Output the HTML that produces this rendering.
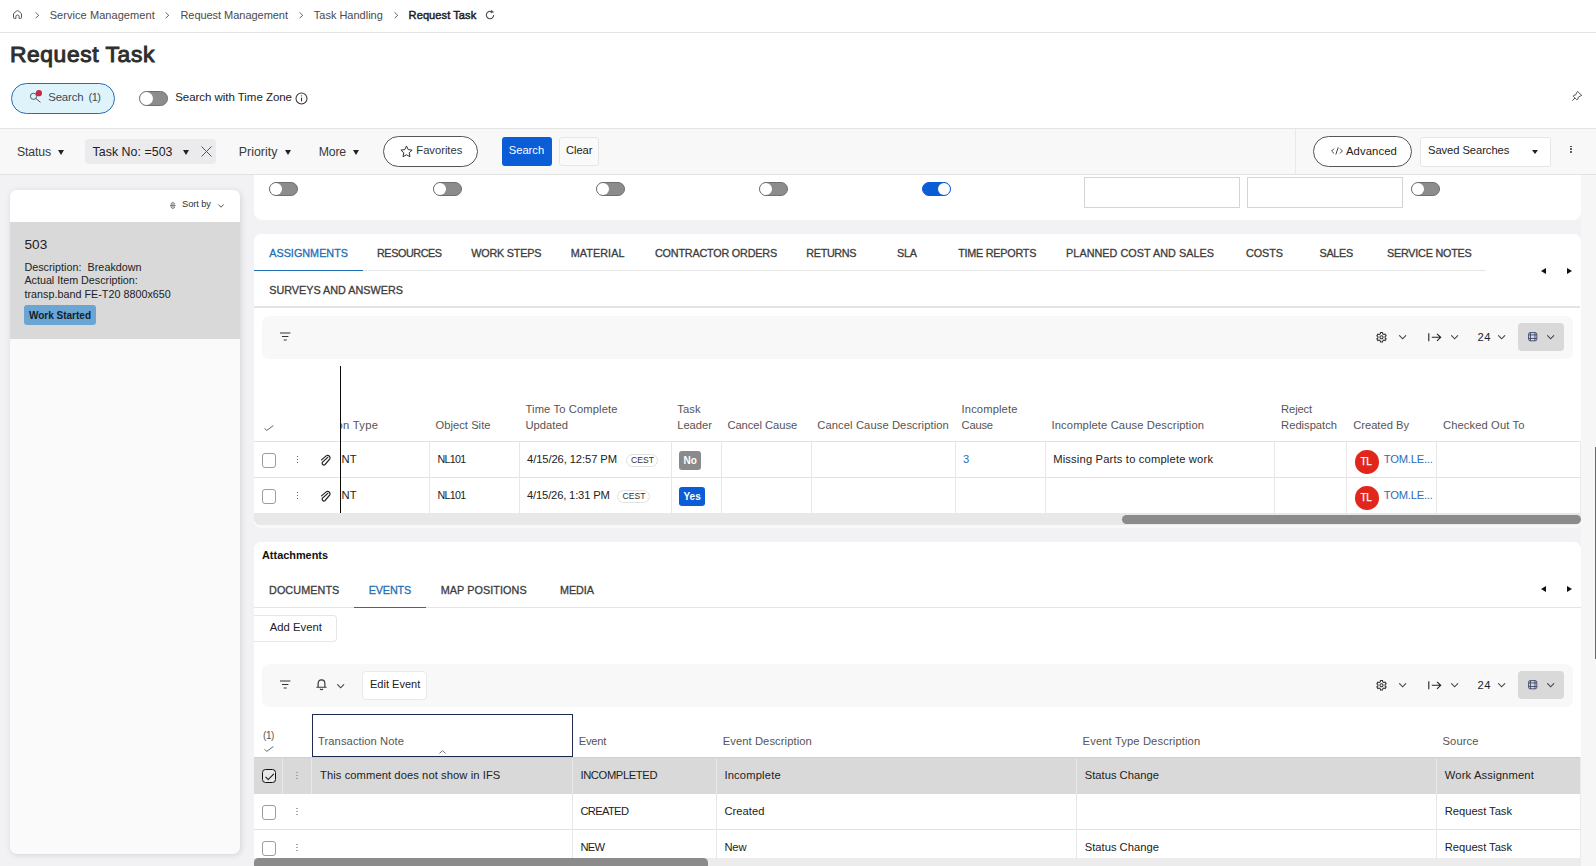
<!DOCTYPE html><html><head>
<meta charset="utf-8">
<title>Request Task</title>
<style>
*{box-sizing:border-box;margin:0;padding:0}
html,body{width:1596px;height:866px;overflow:hidden}
body{font-family:"Liberation Sans",sans-serif;font-size:11px;color:#222;background:#f2f1f3;position:relative}
.abs{position:absolute}
.t{position:absolute;white-space:nowrap;line-height:1}
svg{position:absolute;overflow:visible}
/* top */
#top{left:0;top:0;width:1596px;height:129px;background:#fff;border-bottom:1px solid #e4e4e4}
#crumbline{left:0;top:32px;width:1596px;height:1px;background:#e3e3e3}
.bc{font-size:11px;color:#4a4a4a;top:10px}
.pill{position:absolute;border:1px solid #555;border-radius:16px;background:#fff}
.btn{position:absolute;border:1px solid #dedede;border-radius:3px;background:#fff}
.tog{position:absolute;width:29px;height:14px;border-radius:7px;background:#8c8c8c;border:1px solid #6f6f6f}
.tog i{position:absolute;left:0px;top:0px;width:12px;height:12px;border-radius:6px;background:#fff}
.tog.on{background:#0b5cd7;border-color:#0b5cd7}
.tog.on i{left:15px}
#fbar{left:0;top:129px;width:1596px;height:46px;background:#f8f8f8;border-bottom:1px solid #e2e2e2}
.ft{font-size:12.3px;color:#3a3a3a;top:146.2px}
.caret{position:absolute;width:0;height:0;border-left:3.5px solid transparent;border-right:3.5px solid transparent;border-top:5px solid #222}
.card{position:absolute;background:#fff}
.tab{font-size:10.8px;color:#3c3c3c;letter-spacing:0;-webkit-text-stroke:0.3px #3c3c3c}
.tab.act{color:#1f6fb5;-webkit-text-stroke:0.3px #1f6fb5}
.hd{font-size:11.2px;color:#555}
.cell{font-size:11.2px;color:#222}
.vl{position:absolute;width:1px;background:#e7e7e7}
.hl{position:absolute;height:1px;background:#e2e2e2}
.cb{position:absolute;width:14px;height:14.5px;border:1px solid #9c9c9c;border-radius:3px;background:#fff}
.dots{position:absolute;width:2px}
.dots i{display:block;width:1.7px;height:1.7px;border-radius:1px;background:#333;margin-bottom:1.25px}
.dots.lt i{background:#9a9a9a;width:1.3px}
.tb{background:#f8f8f8;border-radius:7px}
.arrl{width:0;height:0;border-top:3.2px solid transparent;border-bottom:3.2px solid transparent;border-right:5px solid #111}
.arrr{width:0;height:0;border-top:3.2px solid transparent;border-bottom:3.2px solid transparent;border-left:5px solid #111}
</style>
</head>
<body>
<!-- TOP -->
<div class="abs" id="top"></div>
<div class="abs" id="crumbline"></div>
<svg style="left:12.5px;top:9.8px" width="9" height="9" viewBox="0 0 9 9" fill="none" stroke="#555" stroke-width="1" stroke-linejoin="round"><path d="M0.5 3.9 Q0.5 3.5 0.9 3.2 L3.9 0.8 Q4.5 0.4 5.1 0.8 L8.1 3.2 Q8.5 3.5 8.5 3.9 V7.6 Q8.5 8.4 7.7 8.4 H6.1 V6.2 Q6.1 5 4.5 5 Q2.9 5 2.9 6.200 V8.4 H1.3 Q0.5 8.4 0.5 7.6 Z"></path></svg>
<svg style="left:34.6px;top:11.7px" width="4.5" height="6.6" viewBox="0 0 5 8" fill="none" stroke="#4a4a4a" stroke-width="1.05"><path d="M0.5 0.5 L4.3 4 L0.5 7.5"></path></svg>
<span class="t bc" style="left: 49.7px; letter-spacing: 0.062px;">Service Management</span>
<svg style="left:165.2px;top:11.7px" width="4.5" height="6.6" viewBox="0 0 5 8" fill="none" stroke="#4a4a4a" stroke-width="1.05"><path d="M0.5 0.5 L4.3 4 L0.5 7.5"></path></svg>
<span class="t bc" style="left: 180.4px; letter-spacing: -0.037px;">Request Management</span>
<svg style="left:298.6px;top:11.7px" width="4.5" height="6.6" viewBox="0 0 5 8" fill="none" stroke="#4a4a4a" stroke-width="1.05"><path d="M0.5 0.5 L4.3 4 L0.5 7.5"></path></svg>
<span class="t bc" style="left: 313.8px; letter-spacing: -0.008px;">Task Handling</span>
<svg style="left:394px;top:11.7px" width="4.5" height="6.6" viewBox="0 0 5 8" fill="none" stroke="#4a4a4a" stroke-width="1.05"><path d="M0.5 0.5 L4.3 4 L0.5 7.5"></path></svg>
<span class="t bc" style="left: 408.6px; font-weight: 400; color: rgb(28, 28, 28); font-size: 11.1px; -webkit-text-stroke: 0.45px rgb(28, 28, 28); letter-spacing: 0.053px;">Request Task</span>
<svg style="left:484.8px;top:10px" width="10" height="10" viewBox="0 0 10 10" fill="none" stroke="#444" stroke-width="1.05"><path d="M8.7 5 A3.7 3.7 0 1 1 7 1.9"></path><path d="M6.4 0.2 L8.6 2.1 L5.9 3.1 Z" fill="#444" stroke-width="0.4"></path></svg>

<span class="t" style="left: 10px; top: 42.8px; font-size: 22.8px; font-weight: 400; color: rgb(46, 46, 46); -webkit-text-stroke: 1px rgb(46, 46, 46); letter-spacing: 0.598px;">Request Task</span>

<div class="pill" style="left:11px;top:83px;width:104px;height:31px;border-color:#2a6cb3;background:#dff3fb;border-radius:16px"></div>
<svg style="left:29px;top:90px" width="14" height="14" viewBox="0 0 14 14" fill="none" stroke="#4a5868" stroke-width="1"><circle cx="4.5" cy="6.3" r="3.1"></circle><path d="M6.9 8.6 L11.5 12.3"></path><circle cx="9.9" cy="3.2" r="3.1" fill="#c5294a" stroke="none"></circle></svg>
<span class="t" style="left: 48.2px; top: 92px; font-size: 11.4px; color: rgb(59, 74, 90); letter-spacing: -0.139px;">Search</span><span class="t" style="left:88.6px;top:92px;font-size:11px;color:#3b4a5a;letter-spacing:-0.6px">(1)</span>

<div class="tog" style="left:139px;top:91px;height:15px;border-radius:7.5px"><i style="width:13px;height:13px;border-radius:6.5px"></i></div>
<span class="t" style="left: 175.2px; top: 92px; font-size: 11.5px; color: rgb(34, 34, 34); letter-spacing: -0.04px;">Search with Time Zone</span>
<svg style="left:294.5px;top:91.5px" width="13" height="13" viewBox="0 0 13 13" fill="none" stroke="#333" stroke-width="1.05"><circle cx="6.5" cy="6.5" r="5.5"></circle><path d="M6.5 5.6 V9.4" stroke-width="1.1"></path><circle cx="6.5" cy="3.8" r="0.6" fill="#333" stroke="none"></circle></svg>
<svg style="left:1572px;top:91px" width="10" height="10" viewBox="0 0 10 10" fill="none" stroke="#444" stroke-width="0.9" stroke-linejoin="round"><path d="M5.5 0.4 L9.7 4.4 L8 5.2 L6.3 6.2 L5.8 8.2 L4.6 8.7 L1.3 5.3 L1.8 4.3 L3.8 3.8 L4.6 1.7 Z"></path><path d="M2.9 7 L0.3 9.7"></path></svg>

<!-- FILTER BAR -->
<div class="abs" id="fbar"></div>
<span class="t ft" style="left: 17px; letter-spacing: -0.135px;">Status</span><div class="caret" style="left:58px;top:149.6px"></div>
<div class="abs" style="left:85px;top:139px;width:131px;height:25px;background:#ebebee;border-radius:4px"></div>
<span class="t ft" style="left: 92.5px; font-size: 12.4px; color: rgb(34, 34, 34); letter-spacing: 0.036px;">Task No: =503</span><div class="caret" style="left:183px;top:149.6px"></div>
<svg style="left:201px;top:146px" width="11" height="11" viewBox="0 0 11 11" stroke="#555" stroke-width="1"><path d="M0.5 0.5 L10.5 10.5 M10.5 0.5 L0.5 10.5"></path></svg>
<span class="t ft" style="left: 238.7px; font-size: 12.4px; letter-spacing: 0.034px;">Priority</span><div class="caret" style="left:285px;top:149.6px"></div>
<span class="t ft" style="left: 318.7px; letter-spacing: -0.177px;">More</span><div class="caret" style="left:353px;top:149.6px"></div>
<div class="pill" style="left:383px;top:136px;width:95px;height:31px"></div>
<svg style="left:400px;top:145px" width="13" height="13" viewBox="0 0 13 13" fill="none" stroke="#333" stroke-width="1" stroke-linejoin="round"><path d="M6.5 1 L8.2 4.6 L12.1 5.1 L9.2 7.8 L10 11.7 L6.5 9.8 L3 11.7 L3.8 7.8 L0.9 5.1 L4.8 4.6 Z"></path></svg>
<span class="t" style="left: 416.3px; top: 145px; font-size: 11.2px; color: rgb(51, 51, 51); letter-spacing: -0.002px;">Favorites</span>
<div class="abs" style="left:502px;top:137px;width:50px;height:29px;background:#0b5cd7;border-radius:3px"></div>
<span class="t" style="left: 508.7px; top: 145px; font-size: 11.2px; color: rgb(255, 255, 255); letter-spacing: 0.009px;">Search</span>
<div class="btn" style="left:558.8px;top:137px;width:40.6px;height:29px;background:#fafafa;border-color:#e6e6e6"></div>
<span class="t" style="left: 566px; top: 145px; font-size: 11.2px; color: rgb(34, 34, 34); letter-spacing: -0.059px;">Clear</span>
<div class="vl" style="left:1295px;top:129px;height:46px;background:#e9e9e9"></div>
<div class="pill" style="left:1312.7px;top:136px;width:99.8px;height:31px"></div>
<svg style="left:1330.5px;top:147px" width="12" height="8" viewBox="0 0 12 8" fill="none" stroke="#333" stroke-width="0.9"><path d="M3 1.6 L0.6 4 L3 6.4 M9 1.6 L11.4 4 L9 6.4 M7.2 0.4 L4.8 7.6"></path></svg>
<span class="t" style="left: 1346px; top: 145.5px; font-size: 11.3px; color: rgb(34, 34, 34); letter-spacing: 0.079px;">Advanced</span>
<div class="btn" style="left:1419.7px;top:136.5px;width:131px;height:30px;border-color:#e6e6e6"></div>
<span class="t" style="left: 1428px; top: 145px; font-size: 11.2px; color: rgb(34, 34, 34); letter-spacing: -0.061px;">Saved Searches</span>
<div class="caret" style="left:1532.3px;top:149.6px;border-left-width:3px;border-right-width:3px;border-top-width:4px"></div>
<div class="dots" style="left:1570.3px;top:145.5px"><i style="background:#333"></i><i style="background:#333"></i><i style="background:#333"></i></div>

<!-- LEFT PANEL -->
<div class="card" style="left:10px;top:190px;width:230px;height:664px;background:#fafafa;border-radius:7px;box-shadow:1px 1px 6px rgba(0,0,0,.13)"></div>
<div class="card" style="left:10px;top:190px;width:230px;height:32px;border-radius:7px 7px 0 0"></div>
<svg style="left:169.6px;top:201.2px" width="5.6" height="9" viewBox="0 0 6 9" fill="none" stroke="#555" stroke-width="0.8"><path d="M0.8 3 L3 0.8 L5.2 3 Z M0.8 6 L3 8.2 L5.2 6 Z M0 4.5 H6"></path></svg>
<span class="t" style="left: 182.1px; top: 200.3px; font-size: 9.3px; color: rgb(51, 51, 51); letter-spacing: -0.092px;">Sort by</span>
<svg style="left:217.6px;top:203.6px" width="6" height="4" viewBox="0 0 6 4" fill="none" stroke="#444" stroke-width="0.9"><path d="M0.4 0.5 L3 3.2 L5.6 0.5"></path></svg>
<div class="abs" style="left:10px;top:222px;width:230px;height:116.5px;background:#d9d9d9"></div>
<span class="t" style="left: 24.4px; top: 238px; font-size: 13.6px; color: rgb(34, 34, 34); letter-spacing: 0.106px;">503</span>
<span class="t" style="left: 24.4px; top: 262px; font-size: 10.75px; color: rgb(34, 34, 34); letter-spacing: 0.031px;">Description:&nbsp; Breakdown</span>
<span class="t" style="left: 24.4px; top: 275px; font-size: 10.75px; color: rgb(34, 34, 34); letter-spacing: -0.005px;">Actual Item Description:</span>
<span class="t" style="left: 24.4px; top: 289px; font-size: 10.75px; color: rgb(34, 34, 34); letter-spacing: 0.022px;">transp.band FE-T20 8800x650</span>
<div class="abs" style="left:24.2px;top:305.4px;width:71.5px;height:19.2px;background:#6aa5d3;border-radius:3px"></div>
<span class="t" style="left: 29px; top: 310.8px; font-size: 10px; font-weight: 700; color: rgb(16, 32, 46); letter-spacing: -0.006px;">Work Started</span>

<!-- TOP RIGHT CARD -->
<div class="card" style="left:253.8px;top:175px;width:1327.5px;height:45px;border-radius:0 0 8px 8px"></div>
<div class="tog" style="left:269.3px;top:182px"><i></i></div>
<div class="tog" style="left:432.5px;top:182px"><i></i></div>
<div class="tog" style="left:595.5px;top:182px"><i></i></div>
<div class="tog" style="left:758.6px;top:182px"><i></i></div>
<div class="tog on" style="left:922px;top:182px"><i></i></div>
<div class="abs" style="left:1084px;top:177px;width:156px;height:31px;border:1px solid #d4d4d4;background:#fff"></div>
<div class="abs" style="left:1247px;top:177px;width:156px;height:31px;border:1px solid #d4d4d4;background:#fff"></div>
<div class="tog" style="left:1410.5px;top:182px"><i></i></div>

<!-- ASSIGNMENTS CARD -->
<div class="card" style="left:253.8px;top:234px;width:1327.5px;height:293.5px;border-radius:7px;background:linear-gradient(#fff 0,#fff 290px,#f8f8f8 290px)"></div>
<div class="hl" style="left:254px;top:270px;width:1232px;background:#e6e6e6"></div>
<div class="abs" style="left:254px;top:269.6px;width:108.6px;height:1.6px;background:#1f6fb5"></div>
<span class="t tab act" style="left: 269.2px; top: 248px; letter-spacing: 0.021px;">ASSIGNMENTS</span>
<span class="t tab" style="left: 377px; top: 248px; letter-spacing: -0.426px;">RESOURCES</span>
<span class="t tab" style="left: 471.2px; top: 248px; letter-spacing: -0.189px;">WORK STEPS</span>
<span class="t tab" style="left: 570.7px; top: 248px; letter-spacing: 0.085px;">MATERIAL</span>
<span class="t tab" style="left: 655px; top: 248px; letter-spacing: -0.192px;">CONTRACTOR ORDERS</span>
<span class="t tab" style="left: 806.3px; top: 248px; letter-spacing: -0.331px;">RETURNS</span>
<span class="t tab" style="left: 897.1px; top: 248px; letter-spacing: -0.261px;">SLA</span>
<span class="t tab" style="left: 958.2px; top: 248px; letter-spacing: -0.236px;">TIME REPORTS</span>
<span class="t tab" style="left: 1066.1px; top: 248px; letter-spacing: 0.047px;">PLANNED COST AND SALES</span>
<span class="t tab" style="left: 1246px; top: 248px; letter-spacing: -0.051px;">COSTS</span>
<span class="t tab" style="left: 1319.6px; top: 248px; letter-spacing: -0.328px;">SALES</span>
<span class="t tab" style="left: 1387px; top: 248px; letter-spacing: -0.217px;">SERVICE NOTES</span>
<span class="t tab" style="left: 269.2px; top: 285px; letter-spacing: 0.011px;">SURVEYS AND ANSWERS</span>
<div class="abs" style="left:254px;top:306.4px;width:1326px;height:1.3px;background:#e4e4e4"></div>
<div class="abs arrl" style="left:1541px;top:268px"></div>
<div class="abs arrr" style="left:1566.5px;top:268px"></div>

<!-- toolbar 1 -->
<div class="abs tb" style="left:262px;top:316.2px;width:1311.3px;height:42.6px"></div>
<svg class="ic-filter" style="left:279.6px;top:332.4px" width="10.4" height="9" viewBox="0 0 11 9" fill="none" stroke="#333" stroke-width="1.2"><path d="M0 0.8 H11 M2.1 4.5 H8.9 M3.9 8.2 H7.1"></path></svg>

<!--TB337.4-->
<svg style="left:1376.4px;top:332.2px" width="11" height="10.6" viewBox="0 0 11 10.6" fill="none" stroke="#333" stroke-width="1.05" stroke-linejoin="round"><path d="M6.60 0.53 L4.40 0.53 L4.42 1.76 L2.98 2.59 L1.92 1.96 L0.81 3.87 L1.89 4.47 L1.89 6.13 L0.81 6.73 L1.92 8.64 L2.98 8.01 L4.42 8.84 L4.40 10.07 L6.60 10.07 L6.58 8.84 L8.02 8.01 L9.08 8.64 L10.19 6.73 L9.11 6.13 L9.11 4.47 L10.19 3.87 L9.08 1.96 L8.02 2.59 L6.58 1.76 Z"></path><circle cx="5.5" cy="5.3" r="1.55"></circle></svg>
<svg style="left:1398.7px;top:334.7px" width="7.3" height="4.4" viewBox="0 0 7 4.2" fill="none" stroke="#444" stroke-width="1.05" stroke-linecap="round"><path d="M0.5 0.5 L3.5 3.6 L6.5 0.5"></path></svg>
<svg style="left:1427.5px;top:332.79999999999995px" width="14" height="9" viewBox="0 0 14 9" fill="none" stroke="#222" stroke-width="1.1"><path d="M0.8 0.3 V8.3 M3.8 4.3 H12.6 M9 0.8 L12.7 4.3 L9 7.8"></path></svg>
<svg style="left:1450.8px;top:334.7px" width="7.3" height="4.4" viewBox="0 0 7 4.2" fill="none" stroke="#444" stroke-width="1.05" stroke-linecap="round"><path d="M0.5 0.5 L3.5 3.6 L6.5 0.5"></path></svg>
<span class="t" style="left: 1477.6px; top: 331.6px; font-size: 11.2px; color: rgb(34, 34, 34); letter-spacing: 0.347px;">24</span>
<svg style="left:1498px;top:334.7px" width="7.3" height="4.4" viewBox="0 0 7 4.2" fill="none" stroke="#444" stroke-width="1.05" stroke-linecap="round"><path d="M0.5 0.5 L3.5 3.6 L6.5 0.5"></path></svg>
<div class="abs" style="left:1518px;top:323.09999999999997px;width:46px;height:28px;background:#d9d9d9;border-radius:4px"></div>
<svg style="left:1528px;top:332.4px" width="9.4" height="9.4" viewBox="0 0 10 10" fill="none" stroke="#3a4668" stroke-width="0.95"><rect x="0.6" y="0.6" width="8.8" height="8.8" rx="1.8"></rect><path d="M0.6 3.1 H9.4 M0.6 6.9 H9.4 M2.6 0.6 V9.4 M7.4 0.6 V9.4"></path></svg>
<svg style="left:1547px;top:334.7px" width="7.3" height="4.4" viewBox="0 0 7 4.2" fill="none" stroke="#444" stroke-width="1.05" stroke-linecap="round"><path d="M0.5 0.5 L3.5 3.6 L6.5 0.5"></path></svg>
<!--/TB337.4-->


<!-- table 1 -->
<div class="hl" style="left:254px;top:440.8px;width:1326px"></div>
<div class="hl" style="left:254px;top:477px;width:1326px"></div>
<div class="abs" style="left:253.8px;top:513.2px;width:1327.5px;height:11.4px;background:#e8e8e8;border-radius:0 0 6px 6px"></div>
<div class="abs" style="left:1122.2px;top:515px;width:459px;height:9px;background:#8b8b8b;border-radius:4.5px"></div>
<div class="abs" style="left:340px;top:366px;width:1.3px;height:147px;background:#0a0a0a"></div>
<div class="vl" style="left:429px;top:441px;height:72px"></div>
<div class="vl" style="left:519px;top:441px;height:72px"></div>
<div class="vl" style="left:671px;top:441px;height:72px"></div>
<div class="vl" style="left:721px;top:441px;height:72px"></div>
<div class="vl" style="left:811px;top:441px;height:72px"></div>
<div class="vl" style="left:955px;top:441px;height:72px"></div>
<div class="vl" style="left:1045px;top:441px;height:72px"></div>
<div class="vl" style="left:1274px;top:441px;height:72px"></div>
<div class="vl" style="left:1346px;top:441px;height:72px"></div>
<div class="vl" style="left:1436px;top:441px;height:72px"></div>
<div class="vl" style="left:1579.5px;top:441px;height:72px;background:#ececec"></div>

<svg style="left:263.5px;top:424.5px" width="10" height="6" viewBox="0 0 10 6" fill="none" stroke="#555" stroke-width="0.9"><path d="M0.5 3.4 L2.8 5.4 L9.4 0.5"></path></svg>
<div class="abs" style="left:341.3px;top:400px;width:60px;height:40px;overflow:hidden"><span class="t hd" style="left:-4.8px;top:20px;letter-spacing:0.3px">on Type</span></div>
<span class="t hd" style="left: 435.5px; top: 420px; letter-spacing: 0.027px;">Object Site</span>
<span class="t hd" style="left: 525.5px; top: 404px; letter-spacing: 0.123px;">Time To Complete</span>
<span class="t hd" style="left: 525.5px; top: 420px; letter-spacing: 0.031px;">Updated</span>
<span class="t hd" style="left: 677.2px; top: 404px; letter-spacing: 0.128px;">Task</span>
<span class="t hd" style="left: 677.2px; top: 420px; letter-spacing: -0.009px;">Leader</span>
<span class="t hd" style="left: 727.4px; top: 420px; letter-spacing: -0.035px;">Cancel Cause</span>
<span class="t hd" style="left: 817.3px; top: 420px; letter-spacing: 0.094px;">Cancel Cause Description</span>
<span class="t hd" style="left: 961.6px; top: 404px; letter-spacing: 0.118px;">Incomplete</span>
<span class="t hd" style="left: 961.6px; top: 420px; letter-spacing: -0.236px;">Cause</span>
<span class="t hd" style="left: 1051.5px; top: 420px; letter-spacing: 0.12px;">Incomplete Cause Description</span>
<span class="t hd" style="left: 1281.1px; top: 404px; letter-spacing: -0.124px;">Reject</span>
<span class="t hd" style="left: 1281.1px; top: 420px; letter-spacing: -0.009px;">Redispatch</span>
<span class="t hd" style="left: 1353.2px; top: 420px; letter-spacing: -0.019px;">Created By</span>
<span class="t hd" style="left: 1443px; top: 420px; letter-spacing: 0.106px;">Checked Out To</span>

<div class="cb" style="left:262px;top:453px"></div>
<div class="dots" style="left:296.7px;top:455.8px"><i></i><i></i><i></i></div>
<svg style="left:321px;top:454.7px" width="10" height="11" viewBox="0 0 10 11" fill="none" stroke="#222" stroke-width="1.2" stroke-linecap="round"><path d="M0.5 4.9 L5.2 0.9 A2.4 2.4 0 0 1 8.8 3.9 L3.9 9.7 A1.8 1.8 0 0 1 1.3 7.4 L6.8 2.4"></path></svg>
<div class="abs" style="left:341.3px;top:441px;width:40px;height:36px;overflow:hidden"><span class="t cell" style="left:-7.6px;top:13px;letter-spacing:0.25px">ENT</span></div>
<span class="t cell" style="left: 437.5px; top: 454.2px; font-size: 10.7px; letter-spacing: -0.7px;">NL101</span>
<span class="t cell" style="left: 527px; top: 454px; letter-spacing: -0.09px;">4/15/26, 12:57 PM</span>
<div class="abs" style="left:625.5px;top:453.5px;width:32.5px;height:13px;border:1px solid #e2e2e2;border-radius:7px;background:#fff"></div>
<span class="t" style="left:631.0px;top:456px;font-size:8.6px;color:#333">CEST</span>
<div class="abs" style="left:679px;top:451px;width:22px;height:19px;background:#8a8a8a;border-radius:3px"></div>
<span class="t" style="left:683.5px;top:455.5px;font-size:10px;font-weight:700;color:#fff">No</span>
<div class="abs" style="left:1355px;top:450px;width:23.5px;height:23.5px;border-radius:50%;background:#e1261c"></div>
<span class="t" style="left:1360.6px;top:457.2px;font-size:10px;color:#fff;letter-spacing:-0.4px;-webkit-text-stroke:0.25px #fff">TL</span>
<span class="t cell" style="left: 1383.8px; top: 454px; color: rgb(45, 109, 181); letter-spacing: -0.223px;">TOM.LE...</span>

<div class="cb" style="left:262px;top:489px"></div>
<div class="dots" style="left:296.7px;top:491.8px"><i></i><i></i><i></i></div>
<svg style="left:321px;top:490.7px" width="10" height="11" viewBox="0 0 10 11" fill="none" stroke="#222" stroke-width="1.2" stroke-linecap="round"><path d="M0.5 4.9 L5.2 0.9 A2.4 2.4 0 0 1 8.8 3.9 L3.9 9.7 A1.8 1.8 0 0 1 1.3 7.4 L6.8 2.4"></path></svg>
<div class="abs" style="left:341.3px;top:477px;width:40px;height:36px;overflow:hidden"><span class="t cell" style="left:-7.6px;top:13px;letter-spacing:0.25px">ENT</span></div>
<span class="t cell" style="left: 437.5px; top: 490.2px; font-size: 10.7px; letter-spacing: -0.7px;">NL101</span>
<span class="t cell" style="left: 527px; top: 490px; letter-spacing: -0.161px;">4/15/26, 1:31 PM</span>
<div class="abs" style="left:617px;top:489.5px;width:32.5px;height:13px;border:1px solid #e2e2e2;border-radius:7px;background:#fff"></div>
<span class="t" style="left:622.5px;top:492px;font-size:8.6px;color:#333">CEST</span>
<div class="abs" style="left:679px;top:487px;width:26px;height:19px;background:#0b5cd7;border-radius:3px"></div>
<span class="t" style="left:683.5px;top:491.5px;font-size:10px;font-weight:700;color:#fff">Yes</span>
<div class="abs" style="left:1355px;top:486px;width:23.5px;height:23.5px;border-radius:50%;background:#e1261c"></div>
<span class="t" style="left:1360.6px;top:493.2px;font-size:10px;color:#fff;letter-spacing:-0.4px;-webkit-text-stroke:0.25px #fff">TL</span>
<span class="t cell" style="left: 1383.8px; top: 490px; color: rgb(45, 109, 181); letter-spacing: -0.223px;">TOM.LE...</span>

<span class="t cell" style="left:963px;top:454px;color:#2d6db5">3</span>
<span class="t cell" style="left: 1053.2px; top: 454px; letter-spacing: 0.172px;">Missing Parts to complete work</span>

<!-- ATTACHMENTS CARD -->
<div class="card" style="left:253.8px;top:542px;width:1327.5px;height:340px;border-radius:7px 7px 0 0"></div>
<span class="t" style="left: 262px; top: 550px; font-size: 10.9px; font-weight: 700; color: rgb(17, 17, 17); letter-spacing: 0.003px;">Attachments</span>
<div class="abs" style="left:254px;top:606.8px;width:1327px;height:1.2px;background:#e4e4e4"></div>
<div class="abs" style="left:354px;top:606.6px;width:72.2px;height:1.6px;background:#1f6fb5"></div>
<span class="t tab" style="left: 269px; top: 585px; letter-spacing: 0.088px;">DOCUMENTS</span>
<span class="t tab act" style="left: 368.7px; top: 585px; letter-spacing: -0.121px;">EVENTS</span>
<span class="t tab" style="left: 440.7px; top: 585px; letter-spacing: 0.083px;">MAP POSITIONS</span>
<span class="t tab" style="left: 560px; top: 585px; letter-spacing: -0.051px;">MEDIA</span>
<div class="abs arrl" style="left:1541px;top:585.5px"></div>
<div class="abs arrr" style="left:1566.5px;top:585.5px"></div>
<div class="btn" style="left:253.8px;top:615.2px;width:82.9px;height:26.4px;border-color:#e6e6e6;border-left:none;border-radius:0 4px 4px 0"></div>
<span class="t" style="left: 269.8px; top: 622px; font-size: 11.25px; color: rgb(34, 34, 34); letter-spacing: 0.01px;">Add Event</span>

<!-- toolbar 2 -->
<div class="abs tb" style="left:262px;top:664px;width:1311.3px;height:42.6px"></div>
<svg class="ic-filter" style="left:279.6px;top:680.4px" width="10.4" height="9" viewBox="0 0 11 9" fill="none" stroke="#333" stroke-width="1.2"><path d="M0 0.8 H11 M2.1 4.5 H8.9 M3.9 8.2 H7.1"></path></svg>
<svg style="left:315.5px;top:679.3px" width="11" height="11" viewBox="0 0 11 11" fill="none" stroke="#333" stroke-width="1.15" stroke-linecap="round"><path d="M0.9 8.2 H10.1 M2.1 8.2 V4.7 Q2.1 0.8 5.5 0.8 Q8.9 0.8 8.9 4.7 V8.2 M4.3 10.2 Q5.5 10.9 6.7 10.2"></path></svg>
<svg style="left:337.3px;top:684.4px" width="7.3" height="4.4" viewBox="0 0 7 4.2" fill="none" stroke="#444" stroke-width="1.05" stroke-linecap="round"><path d="M0.5 0.5 L3.5 3.6 L6.5 0.5"></path></svg>
<div class="btn" style="left:362.2px;top:671px;width:64.6px;height:28.5px;border-color:#e9e9e9;border-radius:4px"></div>
<span class="t" style="left: 370px; top: 679px; font-size: 11px; color: rgb(34, 34, 34); letter-spacing: 0.007px;">Edit Event</span>

<!--TB685.3-->
<svg style="left:1376.4px;top:680.0999999999999px" width="11" height="10.6" viewBox="0 0 11 10.6" fill="none" stroke="#333" stroke-width="1.05" stroke-linejoin="round"><path d="M6.60 0.53 L4.40 0.53 L4.42 1.76 L2.98 2.59 L1.92 1.96 L0.81 3.87 L1.89 4.47 L1.89 6.13 L0.81 6.73 L1.92 8.64 L2.98 8.01 L4.42 8.84 L4.40 10.07 L6.60 10.07 L6.58 8.84 L8.02 8.01 L9.08 8.64 L10.19 6.73 L9.11 6.13 L9.11 4.47 L10.19 3.87 L9.08 1.96 L8.02 2.59 L6.58 1.76 Z"></path><circle cx="5.5" cy="5.3" r="1.55"></circle></svg>
<svg style="left:1398.7px;top:682.5999999999999px" width="7.3" height="4.4" viewBox="0 0 7 4.2" fill="none" stroke="#444" stroke-width="1.05" stroke-linecap="round"><path d="M0.5 0.5 L3.5 3.6 L6.5 0.5"></path></svg>
<svg style="left:1427.5px;top:680.6999999999999px" width="14" height="9" viewBox="0 0 14 9" fill="none" stroke="#222" stroke-width="1.1"><path d="M0.8 0.3 V8.3 M3.8 4.3 H12.6 M9 0.8 L12.7 4.3 L9 7.8"></path></svg>
<svg style="left:1450.8px;top:682.5999999999999px" width="7.3" height="4.4" viewBox="0 0 7 4.2" fill="none" stroke="#444" stroke-width="1.05" stroke-linecap="round"><path d="M0.5 0.5 L3.5 3.6 L6.5 0.5"></path></svg>
<span class="t" style="left: 1477.6px; top: 679.5px; font-size: 11.2px; color: rgb(34, 34, 34); letter-spacing: 0.347px;">24</span>
<svg style="left:1498px;top:682.5999999999999px" width="7.3" height="4.4" viewBox="0 0 7 4.2" fill="none" stroke="#444" stroke-width="1.05" stroke-linecap="round"><path d="M0.5 0.5 L3.5 3.6 L6.5 0.5"></path></svg>
<div class="abs" style="left:1518px;top:671.0px;width:46px;height:28px;background:#d9d9d9;border-radius:4px"></div>
<svg style="left:1528px;top:680.3px" width="9.4" height="9.4" viewBox="0 0 10 10" fill="none" stroke="#3a4668" stroke-width="0.95"><rect x="0.6" y="0.6" width="8.8" height="8.8" rx="1.8"></rect><path d="M0.6 3.1 H9.4 M0.6 6.9 H9.4 M2.6 0.6 V9.4 M7.4 0.6 V9.4"></path></svg>
<svg style="left:1547px;top:682.5999999999999px" width="7.3" height="4.4" viewBox="0 0 7 4.2" fill="none" stroke="#444" stroke-width="1.05" stroke-linecap="round"><path d="M0.5 0.5 L3.5 3.6 L6.5 0.5"></path></svg>
<!--/TB685.3-->


<!-- table 2 -->
<div class="abs" style="left:254px;top:757px;width:1326px;height:36.5px;background:#d9d9d9"></div>
<div class="hl" style="left:254px;top:757px;width:1326px;background:#d0d0d0"></div>
<div class="hl" style="left:254px;top:829px;width:1326px"></div>
<div class="abs" style="left:312px;top:714px;width:261px;height:43px;border:1px solid #1d2b4f"></div>
<span class="t hd" style="left:263px;top:730.8px;font-size:10px;letter-spacing:-0.4px">(1)</span>
<svg style="left:263.5px;top:745.8px" width="10" height="6" viewBox="0 0 10 6" fill="none" stroke="#555" stroke-width="0.9"><path d="M0.5 3.4 L2.8 5.4 L9.4 0.5"></path></svg>
<span class="t hd" style="left: 318px; top: 736px; letter-spacing: 0.081px;">Transaction Note</span>
<svg style="left:439px;top:749.5px" width="7" height="4" viewBox="0 0 7 4" fill="none" stroke="#555" stroke-width="0.8"><path d="M0.4 3.5 L3.5 0.6 L6.6 3.5"></path></svg>
<span class="t hd" style="left: 578.7px; top: 736px; letter-spacing: -0.227px;">Event</span>
<span class="t hd" style="left: 722.7px; top: 736px; letter-spacing: 0.088px;">Event Description</span>
<span class="t hd" style="left: 1082.6px; top: 736px; letter-spacing: 0.131px;">Event Type Description</span>
<span class="t hd" style="left: 1442.6px; top: 736px; letter-spacing: 0.069px;">Source</span>
<div class="vl" style="left:282px;top:757.5px;height:36px;background:#e9e9e9"></div>
<div class="vl" style="left:311px;top:757.5px;height:36px;background:#e9e9e9"></div>
<div class="vl" style="left:572px;top:757.5px;height:36px;background:#e9e9e9"></div>
<div class="vl" style="left:716px;top:757.5px;height:36px;background:#e9e9e9"></div>
<div class="vl" style="left:1076px;top:757.5px;height:36px;background:#e9e9e9"></div>
<div class="vl" style="left:1436px;top:757.5px;height:36px;background:#e9e9e9"></div>
<div class="vl" style="left:572px;top:793.5px;height:72px"></div>
<div class="vl" style="left:716px;top:793.5px;height:72px"></div>
<div class="vl" style="left:1076px;top:793.5px;height:72px"></div>
<div class="vl" style="left:1436px;top:793.5px;height:72px"></div>
<div class="vl" style="left:1579.5px;top:757px;height:110px;background:#ececec"></div>
<div class="cb" style="left:262px;top:769px;width:14px;height:14.2px;border:1.5px solid #111;border-radius:3.5px;background:#e8e8e8"></div>
<svg style="left:264.5px;top:772.5px" width="9.4" height="7.6" viewBox="0 0 10 8" fill="none" stroke="#111" stroke-width="1.1"><path d="M0.6 4.2 L3.4 7 L9.4 0.8"></path></svg>
<div class="dots lt" style="left:296.4px;top:771.8px"><i></i><i></i><i></i></div>
<span class="t cell" style="left: 320px; top: 770px; letter-spacing: 0.077px;">This comment does not show in IFS</span>
<span class="t cell" style="left: 580.4px; top: 770px; letter-spacing: -0.371px;">INCOMPLETED</span>
<span class="t cell" style="left: 724.4px; top: 770px; letter-spacing: 0.174px;">Incomplete</span>
<span class="t cell" style="left: 1084.7px; top: 770px; letter-spacing: 0.015px;">Status Change</span>
<span class="t cell" style="left: 1444.8px; top: 770px; letter-spacing: 0.154px;">Work Assignment</span>
<div class="cb" style="left:262px;top:805px"></div>
<div class="dots lt" style="left:296.4px;top:807.8px"><i></i><i></i><i></i></div>
<span class="t cell" style="left:320px;top:806px"></span>
<span class="t cell" style="left: 580.4px; top: 806px; letter-spacing: -0.673px;">CREATED</span>
<span class="t cell" style="left: 724.4px; top: 806px; letter-spacing: 0.048px;">Created</span>
<span class="t cell" style="left:1084.5px;top:806px"></span>
<span class="t cell" style="left: 1444.8px; top: 806px; letter-spacing: -0.034px;">Request Task</span>
<div class="cb" style="left:262px;top:841px"></div>
<div class="dots lt" style="left:296.4px;top:843.8px"><i></i><i></i><i></i></div>
<span class="t cell" style="left:320px;top:842px"></span>
<span class="t cell" style="left: 580.4px; top: 842px; letter-spacing: -0.705px;">NEW</span>
<span class="t cell" style="left: 724.4px; top: 842px; letter-spacing: -0.095px;">New</span>
<span class="t cell" style="left: 1084.7px; top: 842px; letter-spacing: 0.015px;">Status Change</span>
<span class="t cell" style="left: 1444.8px; top: 842px; letter-spacing: -0.034px;">Request Task</span>

<div class="abs" style="left:254px;top:857.5px;width:1327px;height:9px;background:#ececec"></div>
<div class="abs" style="left:254px;top:858px;width:454px;height:9px;background:#8b8b8b;border-radius:4.5px 4.5px 0 0"></div>

<!-- page scrollbar -->
<div class="abs" style="left:1581.4px;top:175px;width:14.6px;height:691px;background:#f6f6f7"></div>
<div class="abs" style="left:1594.8px;top:447px;width:1.2px;height:212px;background:#6a6a6a"></div>



</body></html>
